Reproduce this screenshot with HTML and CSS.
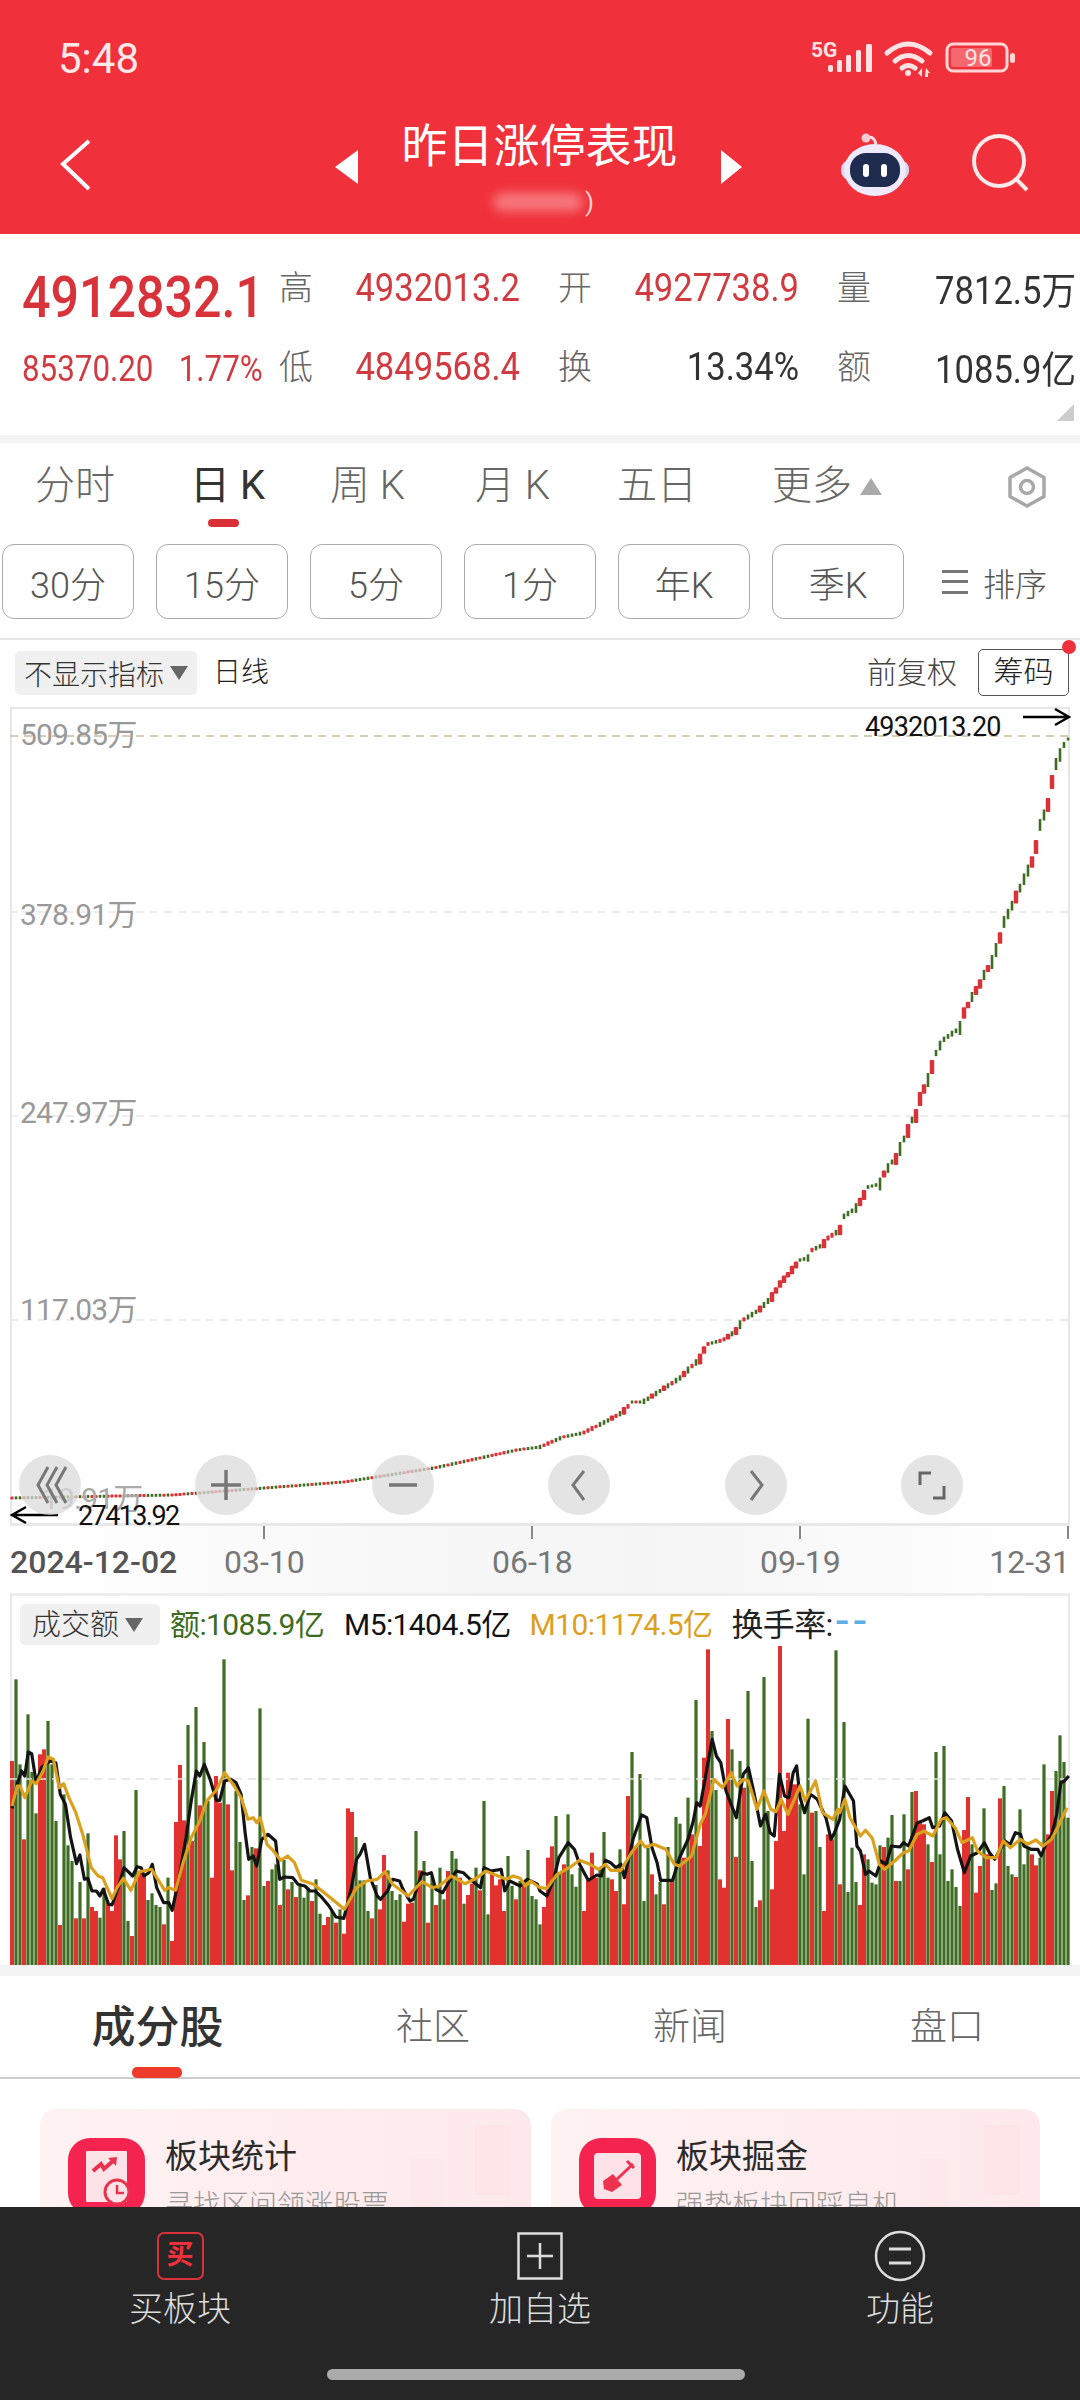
FILE: index.html
```html
<!DOCTYPE html>
<html lang="zh">
<head>
  <meta charset="UTF-8">
  <meta name="viewport" content="width=device-width, initial-scale=1.0">
  <title>昨日涨停表现</title>
  <link rel="stylesheet" href="styles.css">
</head>
<body>
  <header class="top">
    <div class="status">
      <span class="time">5:48</span>
      <svg class="status-icons" width="210" height="50" viewBox="810 30 210 50">
        <text x="811" y="57" class="five-g">5G</text>
        <g fill="#ffe3e3">
          <rect x="828" y="65" width="5" height="7" rx="2"/>
          <rect x="837" y="60" width="5" height="12" rx="1.5"/>
          <rect x="846" y="55" width="5" height="17" rx="1.5"/>
          <rect x="856" y="50" width="5" height="22" rx="1.5"/>
          <rect x="866" y="44" width="6" height="28" rx="1.5"/>
        </g>
        <g fill="none" stroke="#ffe3e3" stroke-width="5" stroke-linecap="round">
          <path d="M887 53 Q908 35 930 53"/>
          <path d="M895 61 Q908 50 922 61"/>
          <path d="M902 68 Q908 63 915 68"/>
        </g>
        <circle cx="908" cy="73" r="3" fill="#ffe3e3"/>
        <path d="M922 68 l-4 5 4 4z M926 68 l4 5 h-2 v4 h-3z" fill="#ffe3e3"/>
        <rect x="947" y="44" width="60" height="27" rx="6" fill="none" stroke="#ffd5d6" stroke-width="3"/>
        <rect x="951" y="48" width="41" height="19" rx="2" fill="#f6686f"/>
        <rect x="1010" y="53" width="5" height="10" rx="2.5" fill="#ffd5d6"/>
        <text x="978" y="66" class="batt">96</text>
      </svg>
    </div>
    <div class="nav">
      <svg class="back" width="32" height="52" viewBox="0 0 32 52"><path d="M29 2 L3 25 L29 50" fill="none" stroke="#fff" stroke-width="4"/></svg>
      <div class="nav-center">
        <span class="tri tri-left"></span>
        <div class="nav-title">
          <h1>昨日涨停表现</h1>
          <div class="nav-sub"><span class="smudge"></span><span class="paren">)</span></div>
        </div>
        <span class="tri tri-right"></span>
      </div>
      <div class="nav-right">
        <svg width="70" height="64" viewBox="0 0 70 64">
          <path d="M27 7 Q33 2 36 12" fill="none" stroke="#f8dfe8" stroke-width="3"/>
          <circle cx="26" cy="6" r="4.5" fill="#f9c9d1"/>
          <rect x="1" y="28" width="68" height="20" rx="9" fill="#d9d4f3"/>
          <ellipse cx="35" cy="38" rx="31" ry="26" fill="#efeafb"/>
          <rect x="10" y="21" width="50" height="34" rx="16" fill="#1f2c4f"/>
          <rect x="23" y="32" width="6" height="13" rx="3" fill="#fff"/>
          <rect x="41" y="32" width="6" height="13" rx="3" fill="#fff"/>
        </svg>
        <svg width="60" height="60" viewBox="0 0 60 60"><circle cx="27" cy="27" r="25" fill="none" stroke="#ffeaea" stroke-width="4"/><path d="M44 45 L55 56" stroke="#ffeaea" stroke-width="4"/></svg>
      </div>
    </div>
  </header>

  <section class="quote">
    <div class="quote-grid">
      <div class="price">4912832.1</div>
      <div class="lbl">高</div><div class="val up">4932013.2</div>
      <div class="lbl">开</div><div class="val up">4927738.9</div>
      <div class="lbl">量</div><div class="val">7812.5万</div>
      <div class="change"><span>85370.20</span><span>1.77%</span></div>
      <div class="lbl">低</div><div class="val up">4849568.4</div>
      <div class="lbl">换</div><div class="val">13.34%</div>
      <div class="lbl">额</div><div class="val">1085.9亿</div>
    </div>
    <span class="corner"></span>
  </section>

  <nav class="periods">
    <span>分时</span>
    <span class="on">日 K</span>
    <span>周 K</span>
    <span>月 K</span>
    <span>五日</span>
    <span class="more">更多<i class="tri-up"></i></span>
    <svg class="gear" width="44" height="44" viewBox="0 0 44 44"><path d="M22 3 L39 12.500 V31.500 L22 41 L5 31.500 V12.500 Z" fill="none" stroke="#a8a8a8" stroke-width="3.500" stroke-linejoin="round"/><circle cx="22" cy="22" r="6.500" fill="none" stroke="#a8a8a8" stroke-width="3.500"/></svg>
  </nav>

  <div class="ranges">
    <button>30分</button>
    <button>15分</button>
    <button>5分</button>
    <button>1分</button>
    <button>年K</button>
    <button>季K</button>
    <span class="sort"><i class="sort-icon"></i>排序</span>
  </div>

  <div class="chart-head">
    <span class="chip">不显示指标<i class="tri-down"></i></span>
    <span class="head-text">日线</span>
    <span class="head-right">前复权</span>
    <span class="chouma">筹码</span>
  </div>

  <div class="kline">
    <svg id="kline-svg" class="plot" viewBox="10 707 1060 816"></svg>
    <span class="ylab l1">509.85万</span>
    <span class="ylab l2">378.91万</span>
    <span class="ylab l3">247.97万</span>
    <span class="ylab l4">117.03万</span>
    <span class="ylab l5">19.91万</span>
    <span class="mark hi">4932013.20</span>
    <span class="mark lo">27413.92</span>
    <svg class="arrow hi-arrow" width="48" height="20" viewBox="0 0 48 20"><path d="M0 10 H46 M32 2 L46 10 L32 18" fill="none" stroke="#000" stroke-width="2.500"/></svg>
    <svg class="arrow lo-arrow" width="48" height="20" viewBox="0 0 48 20"><path d="M48 10 H2 M16 2 L2 10 L16 18" fill="none" stroke="#000" stroke-width="2.500"/></svg>
    <div class="tools">
      <span class="tool"><svg width="36" height="44" viewBox="0 0 36 44"><path d="M16 4 L6 22 L16 40 M25 4 L15 22 L25 40 M34 4 L24 22 L34 40" fill="none" stroke="#777" stroke-width="3"/></svg></span>
      <span class="tool"><svg width="34" height="34" viewBox="0 0 34 34"><path d="M2 17 H32 M17 2 V32" stroke="#777" stroke-width="3.500"/></svg></span>
      <span class="tool"><svg width="34" height="34" viewBox="0 0 34 34"><path d="M3 17 H31" stroke="#777" stroke-width="3.500"/></svg></span>
      <span class="tool"><svg width="34" height="34" viewBox="0 0 34 34"><path d="M22 3 L11 17 L22 32" fill="none" stroke="#777" stroke-width="3"/></svg></span>
      <span class="tool"><svg width="34" height="34" viewBox="0 0 34 34"><path d="M12 3 L23 17 L12 32" fill="none" stroke="#777" stroke-width="3"/></svg></span>
      <span class="tool"><svg width="34" height="34" viewBox="0 0 34 34"><path d="M16 5 H5 V17 M18 30 H29 V18" fill="none" stroke="#666" stroke-width="3"/></svg></span>
    </div>
  </div>

  <div class="axis">
    <i class="tick t1"></i><i class="tick t2"></i><i class="tick t3"></i><i class="tick t4"></i>
    <span class="date d0">2024-12-02</span>
    <span class="date d1">03-10</span>
    <span class="date d2">06-18</span>
    <span class="date d3">09-19</span>
    <span class="date d4">12-31</span>
  </div>

  <div class="volume">
    <div class="vol-head">
      <span class="chip vol-chip">成交额<i class="tri-down"></i></span>
      <span class="g">额:1085.9亿</span>
      <span class="k">M5:1404.5亿</span>
      <span class="o">M10:1174.5亿</span>
      <span class="t">换手率:<b>--</b></span>
    </div>
    <svg id="vol-svg" class="vol-plot" viewBox="10 1645 1060 319"></svg>
  </div>

  <section class="lower">
    <div class="tabs">
      <span class="tab on">成分股</span>
      <span class="tab">社区</span>
      <span class="tab">新闻</span>
      <span class="tab">盘口</span>
    </div>
    <div class="cards">
      <div class="card">
        <svg class="card-icon" width="77" height="77" viewBox="0 0 77 77">
          <rect width="77" height="77" rx="22" fill="#f5234f"/>
          <rect x="18" y="13" width="41" height="51" rx="1" fill="#fde3e8"/>
          <path d="M25 33 L33 26 L36 31 L46 22" fill="none" stroke="#e8334f" stroke-width="4"/>
          <path d="M40 20 L49 19 L48 28 Z" fill="#e8334f"/>
          <circle cx="49" cy="54" r="12" fill="#fde3e8" stroke="#e8334f" stroke-width="3"/>
          <path d="M49 47 V55 H56" fill="none" stroke="#e8334f" stroke-width="2.500"/>
        </svg>
        <div>
          <div class="card-title">板块统计</div>
          <div class="card-sub">寻找区间领涨股票</div>
        </div>
      </div>
      <div class="card">
        <svg class="card-icon" width="77" height="77" viewBox="0 0 77 77">
          <rect width="77" height="77" rx="22" fill="#f5234f"/>
          <rect x="15" y="15" width="47" height="46" rx="4" fill="#fde3e8"/>
          <path d="M54 26 L36 43 M48 23 L55 30" fill="none" stroke="#ee3350" stroke-width="3"/>
          <path d="M24 43 L34 36 L43 47 L33 54 L25 51 Z" fill="#ee3350"/>
        </svg>
        <div>
          <div class="card-title">板块掘金</div>
          <div class="card-sub">强势板块回踩良机</div>
        </div>
      </div>
    </div>
  </section>

  <footer class="bottom">
    <div class="bottom-items">
      <div class="item">
        <span class="buy-box">买</span>
        <span>买板块</span>
      </div>
      <div class="item">
        <svg width="46" height="48" viewBox="0 0 46 48"><rect x="1.500" y="1.500" width="43" height="45" fill="none" stroke="#ddd" stroke-width="2.500"/><path d="M10 24 H36 M23 11 V37" stroke="#ddd" stroke-width="2.500"/></svg>
        <span>加自选</span>
      </div>
      <div class="item">
        <svg class="fn-icon" width="52" height="52" viewBox="0 0 52 52"><circle cx="26" cy="26" r="24" fill="none" stroke="#ddd" stroke-width="2.500"/><path d="M15 19 H37 M15 33 H37" stroke="#ddd" stroke-width="3"/></svg>
        <span>功能</span>
      </div>
    </div>
    <div class="home-bar"></div>
  </footer>

  <script src="chart.js"></script>
</body>
</html>
```

FILE: styles.css
```css
* {
  box-sizing: border-box;
}
html, body {
  margin: 0;
  padding: 0;
}
body {
  position: relative;
  width: 1080px;
  height: 2400px;
  overflow: hidden;
  background: #fff;
  font-family: Roboto, "Noto Sans CJK SC", sans-serif;
  color: #333;
}
i {
  font-style: normal;
}

/* header */
.top {
  height: 234px;
  background: #f0303a;
  color: #fff;
}
.status {
  height: 88px;
  padding: 0 0 0 58px;
  display: flex;
  align-items: center;
  justify-content: space-between;
}
.time {
  font-size: 42px;
  color: #ffe8e8;
  position: relative;
  top: 14px;
}
.status-icons {
  margin-right: 60px;
  margin-top: 22px;
  display: block;
}
.five-g {
  font: bold 21px Roboto, sans-serif;
  fill: #ffe3e3;
}
.batt {
  font: 24px Roboto, sans-serif;
  fill: #ffe3e3;
  text-anchor: middle;
}
.nav {
  height: 146px;
  display: flex;
  align-items: center;
  padding-left: 60px;
  position: relative;
}
.back {
  margin-top: 8px;
}
.nav-center {
  display: flex;
  align-items: center;
  margin-left: 243px;
  width: 407px;
  margin-top: 12px;
  justify-content: space-between;
}
.tri {
  width: 0;
  height: 0;
  border-top: 17px solid transparent;
  border-bottom: 17px solid transparent;
}
.tri-left {
  border-right: 23px solid #fff;
}
.tri-right {
  border-left: 21px solid #fff;
}
.nav-title {
  text-align: center;
  margin-top: -12px;
}
.nav-title h1 {
  margin: 0;
  font-size: 46px;
  font-weight: 400;
  line-height: 60px;
  white-space: nowrap;
}
.nav-sub {
  height: 30px;
  margin-top: 11px;
  margin-bottom: -11px;
  display: flex;
  justify-content: center;
  align-items: center;
  gap: 2px;
  margin-left: 8px;
}
.smudge {
  width: 90px;
  height: 18px;
  border-radius: 9px;
  background: rgba(255, 200, 200, 0.5);
  filter: blur(6px);
}
.paren {
  font-size: 26px;
  line-height: 30px;
  color: #ffd0d0;
}
.nav-right {
  position: absolute;
  left: 840px;
  top: 44px;
  display: flex;
  gap: 62px;
  align-items: center;
}

/* quote block */
.quote {
  position: relative;
  height: 201px;
  padding: 14px 0 0 22px;
}
.quote-grid {
  display: grid;
  grid-template-columns: 219px 72px 207px 72px 207px 72px 205px;
  grid-auto-rows: 79px;
  align-items: center;
}
.price {
  font-size: 57px;
  color: #d8333a;
  white-space: nowrap;
  position: relative;
  top: 10px;
  font-weight: 500;
  transform: scaleX(0.88);
  transform-origin: left center;
}
.change {
  display: flex;
  gap: 29px;
  font-size: 36px;
  color: #d03a40;
  white-space: nowrap;
  position: relative;
  top: 2px;
  transform: scaleX(0.87);
  transform-origin: left center;
}
.lbl {
  text-align: right;
  font-size: 34px;
  color: #666;
  line-height: 44px;
  font-weight: 300;
}
.val {
  text-align: right;
  font-size: 38px;
  color: #333;
  white-space: nowrap;
  transform: scaleX(0.91);
  transform-origin: right center;
}
.val.up {
  color: #d03a40;
}
.corner {
  position: absolute;
  right: 6px;
  bottom: 14px;
  width: 0;
  height: 0;
  border-left: 17px solid transparent;
  border-bottom: 17px solid #ccc;
}

/* period tabs */
.periods {
  border-top: 8px solid #f3f3f3;
  height: 109px;
  padding: 21px 0 0 35px;
  display: grid;
  grid-template-columns: 155px 140px 145px 142px 155px 230px;
  grid-template-rows: 44px;
  font-size: 40px;
  line-height: 44px;
  color: #666;
  font-weight: 300;
  position: relative;
}
.periods .on {
  color: #333;
  font-weight: 400;
  position: relative;
}
.periods .on::after {
  content: "";
  position: absolute;
  left: 18px;
  top: 55px;
  width: 31px;
  height: 8px;
  border-radius: 4px;
  background: #dc3038;
}
.more {
  display: flex;
  align-items: center;
  gap: 8px;
}
.tri-up {
  display: inline-block;
  width: 0;
  height: 0;
  border-left: 11px solid transparent;
  border-right: 11px solid transparent;
  border-bottom: 17px solid #aaa;
}
.gear {
  position: absolute;
  left: 1005px;
  top: 22px;
}

/* range buttons */
.ranges {
  padding-left: 2px;
  display: flex;
  gap: 22px;
  align-items: center;
  height: 75px;
}
.ranges button {
  width: 132px;
  height: 75px;
  border: 1.5px solid #aaa;
  border-radius: 12px;
  background: #fff;
  font: 300 36px Roboto, "Noto Sans CJK SC", sans-serif;
  color: #555;
  padding: 0;
}
.sort {
  margin-left: 16px;
  display: flex;
  align-items: center;
  gap: 15px;
  font-size: 32px;
  font-weight: 300;
  color: #555;
}
.sort-icon {
  width: 26px;
  height: 24px;
  border-top: 3px solid #777;
  border-bottom: 3px solid #777;
  position: relative;
}
.sort-icon::after {
  content: "";
  position: absolute;
  left: 0;
  right: 0;
  top: 7.500px;
  height: 3px;
  background: #777;
}

/* chart head */
.chart-head {
  margin-top: 19px;
  border-top: 2px solid #e6e6e6;
  height: 69px;
  padding: 11px 11px 0 15px;
  display: flex;
  align-items: flex-start;
  position: relative;
}
.chip {
  display: inline-flex;
  align-items: center;
  gap: 6px;
  width: 182px;
  height: 44px;
  padding: 0 7px 0 9px;
  background: #f0f0f0;
  border-radius: 5px;
  font-size: 28px;
  color: #333;
  font-weight: 300;
  white-space: nowrap;
}
.tri-down {
  display: inline-block;
  width: 0;
  height: 0;
  border-left: 9px solid transparent;
  border-right: 9px solid transparent;
  border-top: 14px solid #666;
}
.head-text {
  margin-left: 16px;
  font-size: 28px;
  line-height: 44px;
  font-weight: 300;
  color: #222;
}
.head-right {
  margin-left: auto;
  font-size: 30px;
  line-height: 44px;
  font-weight: 300;
  color: #444;
}
.chouma {
  margin-left: 21px;
  margin-top: -2px;
  width: 91px;
  height: 47px;
  border: 1.5px solid #555;
  border-radius: 5px;
  font-size: 30px;
  line-height: 43px;
  text-align: center;
  font-weight: 300;
  color: #222;
  position: relative;
}
.chouma::after {
  content: "";
  position: absolute;
  right: -8px;
  top: -10px;
  width: 14px;
  height: 14px;
  border-radius: 50%;
  background: #f0303a;
}

/* k line */
.kline {
  position: relative;
  z-index: 1;
  height: 816px;
  margin: 0 10px;
  border: 2px solid #e6e6e6;
  border-bottom: 0;
}
.plot {
  position: absolute;
  left: -2px;
  top: -2px;
  width: 1060px;
  height: 816px;
}
.ylab {
  position: absolute;
  left: 8px;
  font-size: 30px;
  line-height: 32px;
  letter-spacing: -0.800px;
  color: #999;
  font-weight: 400;
}
.l1 { top: 10px; }
.l2 { top: 190px; }
.l3 { top: 388px; }
.l4 { top: 585px; }
.l5 { top: 774px; left: 30px; color: #aaa; }
.mark {
  position: absolute;
  font-size: 27px;
  line-height: 30px;
  letter-spacing: -0.800px;
  color: #111;
}
.hi { left: 853px; top: 3px; }
.lo { left: 66px; top: 792px; letter-spacing: -1.600px; }
.arrow {
  position: absolute;
}
.hi-arrow { left: 1011px; top: -2px; }
.lo-arrow { left: -2px; top: 796px; }
.tools {
  position: absolute;
  left: 7px;
  top: 746px;
  width: 944px;
  display: flex;
  justify-content: space-between;
}
.tool {
  width: 62px;
  height: 60px;
  border-radius: 50%;
  background: rgba(218, 218, 218, 0.72);
  display: flex;
  align-items: center;
  justify-content: center;
}

/* date axis */
.axis {
  position: relative;
  height: 70px;
  margin: 0 10px;
  border-top: 3px solid #e8e8e8;
  background: linear-gradient(90deg, #fff, #f8f8f8 35%, #f5f5f5 60%, #fff);
}
.tick {
  position: absolute;
  top: 0;
  width: 2px;
  height: 13px;
  background: #888;
}
.t1 { left: 253px; }
.t2 { left: 521px; }
.t3 { left: 789px; }
.t4 { left: 1057px; }
.date {
  position: absolute;
  top: 18px;
  font-size: 32px;
  line-height: 36px;
  color: #777;
  font-weight: 400;
  white-space: nowrap;
}
.d0 { left: 0; color: #555; font-weight: 500; }
.d1 { left: 214px; }
.d2 { left: 482px; }
.d3 { left: 750px; }
.d4 { right: 0; }

/* volume */
.volume {
  margin: 0 10px;
  border-top: 3px solid #eee;
  border-left: 2px solid #e8e8e8;
  border-right: 2px solid #e8e8e8;
  position: relative;
  height: 372px;
}
.vol-head {
  height: 50px;
  padding: 7px 0 0 8px;
  display: flex;
  align-items: center;
  font-size: 30px;
  line-height: 40px;
  letter-spacing: -0.600px;
  white-space: nowrap;
}
.vol-chip {
  width: 140px;
  height: 41px;
  font-size: 29px;
  letter-spacing: 0;
  padding: 0 6px 0 12px;
}
.vol-head .g { color: #3d6b22; margin-left: 10px; }
.vol-head .k { color: #111; margin-left: 20px; }
.vol-head .o { color: #dba01e; margin-left: 19px; }
.vol-head .t { color: #222; margin-left: 19px; font-size: 32px; }
.vol-head b {
  color: #5ab0e8;
  font-weight: 400;
  font-size: 46px;
  line-height: 30px;
  letter-spacing: 5px;
  margin-left: 3px;
}
.vol-plot {
  display: block;
  position: absolute;
  left: -2px;
  top: 50px;
  width: 1060px;
  height: 319px;
}

/* lower */
.lower {
  border-top: 11px solid #f3f3f3;
}
.tabs {
  position: relative;
  height: 103px;
  border-bottom: 2px solid #ccc;
  display: grid;
  grid-template-columns: 315px 236px 278px 236px;
  font-size: 37px;
  font-weight: 300;
  color: #666;
}
.tab {
  line-height: 104px;
  text-align: center;
  white-space: nowrap;
}
.tab.on {
  font-size: 44px;
  font-weight: 500;
  color: #333;
  position: relative;
}
.tab.on::after {
  content: "";
  position: absolute;
  left: 132px;
  top: 91px;
  width: 50px;
  height: 11px;
  border-radius: 5px;
  background: #ee3a2a;
}
.cards {
  display: grid;
  grid-template-columns: 491px 489px;
  gap: 20px;
  padding: 30px 40px 0;
}
.card {
  position: relative;
  overflow: hidden;
  height: 160px;
  border-radius: 16px;
  padding: 29px 0 0 28px;
  display: flex;
  gap: 20px;
  background: linear-gradient(90deg, #fff2f3, #feecee 60%, #fde9eb);
}
/* pale candle marks behind the card text */
.card::before,
.card::after {
  content: "";
  position: absolute;
  background: #fde5e8;
}
.card::before {
  right: 20px;
  top: 16px;
  width: 36px;
  height: 70px;
}
.card::after {
  right: 90px;
  top: 50px;
  width: 30px;
  height: 60px;
  opacity: 0.4;
}
.card > * {
  position: relative;
  z-index: 1;
}
.card-icon {
  flex: none;
}
.card-title {
  font-size: 33px;
  line-height: 38px;
  font-weight: 400;
  color: #2a2a2a;
}
.card-sub {
  font-size: 28px;
  line-height: 40px;
  margin-top: 10px;
  font-weight: 300;
  color: #999;
}

/* bottom bar */
.bottom {
  position: absolute;
  z-index: 2;
  left: 0;
  right: 0;
  top: 2207px;
  height: 193px;
  background: #262626;
}
.bottom-items {
  display: grid;
  grid-template-columns: 360px 360px 360px;
  padding-top: 25px;
  color: #ddd;
  font-size: 34px;
  font-weight: 300;
  text-align: center;
}
.item {
  display: flex;
  flex-direction: column;
  align-items: center;
  gap: 6px;
  line-height: 46px;
}
.fn-icon {
  margin: -2px 0;
}
.buy-box {
  width: 47px;
  height: 48px;
  border: 2.500px solid #d8333a;
  border-radius: 7px;
  color: #f0303a;
  font-size: 27px;
  line-height: 42px;
  font-weight: 700;
}
.home-bar {
  position: absolute;
  left: 327px;
  top: 162px;
  width: 418px;
  height: 11px;
  border-radius: 6px;
  background: #aaa;
}
```

FILE: chart.js
```js
// Volume tops read off the chart, negative means a red day
var tops = [
  -480,235,490,-715,340,513,637,-460,-445,360,490,660,-972,580,733,780,-952,843,-952,697,
  -918,-930,950,860,-905,-930,-703,-775,690,960,-1005,567,-810,-820,897,877,912,918,-970,830,
  -1020,-663,-492,-658,372,-720,318,-613,423,600,-830,-525,-605,175,-610,-808,570,723,897,-883,
  738,-742,322,855,-840,805,790,-912,777,-865,843,-888,850,890,860,-900,835,938,-972,-948,
  930,-965,925,-998,-622,-633,708,838,838,930,-952,852,-925,-762,808,870,897,880,-962,-908,
  -905,690,-808,780,-965,825,-912,800,895,-810,750,773,-830,908,-882,-848,800,-868,600,940,
  -810,-853,-835,-930,765,855,-895,840,-850,747,885,895,970,
  -918,-770,-736,645,815,-790,640,820,857,800,-930,-838,-755,-830,800,693,830,-835,-870,745,
  -910,-585,453,-735,519,900,740,-820,880,843,-910,738,-840,648,668,-770,590,-700,297,-735,
  -470,-145,390,567,-835,-860,-354,445,-768,480,-560,270,780,918,-898,228,630,-865,-720,-135,
  -690,-515,-550,-550,610,820,353,-635,630,738,-930,-700,-715,148,-850,363,873,740,843,-912,
  -760,775,845,850,733,-738,710,642,-840,840,640,-805,573,-570,-660,-670,730,-783,453,760,
  435,840,805,858,915,-687,-588,730,-875,-795,622,-760,867,847,-592,555,795,820,-828,625,
  790,740,-760,-793,770,490,-700,-570,510,403,483,650
];

// Moving averages, same read-off, [x, y] in crop units
var blackLeft = [35,622,50,550,62,510,72,525,82,453,92,458,105,545,120,500,145,480,162,485,175,580,190,610,205,710,222,788,232,762,245,835,255,832,267,870,280,870,290,885,300,865,315,910,325,912,345,855,360,800,375,815,385,825,398,797,410,800,418,825,432,815,442,790,455,860,475,905,490,905,500,928,520,830,540,710,555,600,570,510,580,525,593,490,610,535,628,598,638,598,652,540,670,535,685,545,700,580,712,700,722,775,735,765,745,795,760,715,778,700,800,720,812,835,825,828,850,830,865,850,885,855,900,870,915,870,935,890,955,915,975,948,998,952,1020,860,1035,775,1045,760,1058,730,1075,830,1095,885,1105,895,1125,870,1140,835,1160,840,1170,865,1190,900,1200,895,1225,815,1240,820,1252,815,1265,865,1285,875,1310,830,1325,810,1345,815,1365,835,1395,860,1405,800,1425,810,1455,805,1465,870,1480,840,1510,855,1530,835,1560,850];
var blackRight = [0,870,20,885,40,835,55,770,82,725,100,745,115,790,140,838,165,822,178,825,190,778,205,785,220,800,235,790,245,830,270,715,295,642,310,650,325,740,340,785,350,838,385,838,405,770,430,715,445,660,455,605,465,615,480,530,500,415,512,465,525,485,540,570,555,610,570,650,590,520,605,500,620,570,640,675,655,640,668,695,680,705,695,520,710,585,722,590,735,515,745,495,755,590,768,635,785,580,805,595,830,650,845,715,855,695,870,655,885,555,910,600,920,735,930,750,945,820,955,810,975,825,990,780,1005,790,1020,735,1045,738,1055,725,1070,735,1095,665,1110,660,1130,650,1140,680,1160,675,1175,635,1195,660,1212,745,1232,815,1250,765,1270,755,1290,725,1305,755,1320,775,1350,720,1365,730,1380,695,1395,700,1405,735,1425,745,1445,745,1455,765,1470,725,1485,705,1500,640,1512,545,1522,540,1535,525];
var goldLeft = [35,615,50,555,58,555,72,590,92,540,105,548,125,510,140,468,155,475,172,560,185,548,200,590,220,635,240,700,265,800,285,825,298,830,325,893,340,860,358,832,380,868,405,812,440,805,478,868,490,860,510,868,530,790,555,710,580,660,600,600,630,565,652,515,680,555,700,590,720,655,735,650,745,665,755,650,775,730,790,745,815,778,835,765,855,785,875,838,910,850,935,870,1000,925,1035,860,1065,840,1095,835,1118,812,1140,850,1185,885,1225,842,1255,860,1275,855,1310,825,1350,848,1385,830,1410,810,1470,835,1490,825,1510,832,1525,855,1540,840];
var goldRight = [0,860,20,862,50,820,85,800,115,778,145,790,170,805,190,790,205,808,235,808,265,755,292,720,305,738,330,730,365,745,390,790,405,795,440,765,465,670,480,640,505,535,530,560,555,515,572,555,590,535,605,540,630,625,650,570,670,625,685,632,700,595,720,640,755,555,770,600,800,540,820,635,850,655,865,625,870,635,885,595,900,650,930,705,945,688,965,712,985,790,1000,805,1030,780,1055,755,1070,750,1095,700,1115,690,1140,705,1165,655,1180,650,1205,680,1225,725,1255,710,1270,750,1295,770,1325,770,1345,720,1365,740,1395,715,1415,730,1440,717,1460,735,1485,715,1505,675,1530,620];

// Price curve in page pixels
var curve = [[10,1498],[172,1495],[344,1482],[434,1468],[480,1458],[517,1450],[540,1447],[563,1437],[583,1433],[607,1421],[623,1412],[632,1402],[643,1402],[663,1389],[680,1378],[692,1366],[700,1359],[704,1350],[708,1344],[723,1340],[736,1331],[743,1320],[753,1314],[760,1309],[772,1297],[780,1284],[792,1270],[800,1260],[808,1258],[812,1250],[823,1245],[828,1238],[840,1230],[843,1217],[856,1208],[860,1202],[864,1195],[868,1187],[880,1184],[884,1174],[892,1162],[896,1159],[900,1149],[904,1139],[908,1131],[912,1120],[916,1116],[920,1099],[924,1089],[928,1080],[932,1067],[936,1053],[943,1040],[960,1028],[964,1013],[972,997],[980,984],[984,975],[992,962],[1000,938],[1004,922],[1010,910],[1016,897],[1025,877],[1032,862],[1036,847],[1040,825],[1044,815],[1048,805],[1052,782],[1056,764],[1060,755],[1064,745],[1068,739]];

var RED = '#e2322f';
var GREEN = '#3f6d24';
var BASE = 1964;
var NS = 'http://www.w3.org/2000/svg';

function add(svg, tag, attrs) {
  var el = document.createElementNS(NS, tag);
  for (var k in attrs) el.setAttribute(k, attrs[k]);
  svg.appendChild(el);
  return el;
}

function curveY(x) {
  for (var i = 1; i < curve.length; i++) {
    if (x <= curve[i][0]) {
      var a = curve[i - 1], b = curve[i];
      return a[1] + (b[1] - a[1]) * (x - a[0]) / (b[0] - a[0]);
    }
  }
  return curve[curve.length - 1][1];
}

function cropPoints(list, offset) {
  var out = [];
  for (var i = 0; i < list.length; i += 2) {
    out.push((offset + list[i] / 2.903).toFixed(1) + ',' + (1600 + list[i + 1] / 3).toFixed(1));
  }
  return out;
}

function dashed(svg, y, color, dash) {
  add(svg, 'line', { x1: 10, x2: 1070, y1: y, y2: y, stroke: color, 'stroke-width': 1.5, 'stroke-dasharray': dash });
}

// K line
var kline = document.getElementById('kline-svg');
dashed(kline, 736, '#c9bd9c', '8 6');
dashed(kline, 912, '#e8e8e8', '8 6');
dashed(kline, 1116, '#e8e8e8', '8 6');
dashed(kline, 1320, '#e8e8e8', '8 6');

tops.forEach(function (t, i) {
  var x = 12 + i * 4;
  var y = curveY(x);
  var slope = Math.abs(curveY(x + 4) - y);
  var h = slope * (0.5 + 0.7 * Math.abs(Math.sin(i * 5.1))) + 2.5;
  h = Math.max(3, Math.min(14, h));
  var w = t < 0 ? (h > 5 ? 4.5 : 3.2) : 2.6;
  add(kline, 'rect', {
    x: x - w / 2, y: y - h / 2, width: w, height: h, rx: t < 0 ? 1 : 0,
    fill: t < 0 ? '#d9333a' : GREEN
  });
});

// Volume
var vol = document.getElementById('vol-svg');
tops.forEach(function (t, i) {
  var top = 1600 + Math.abs(t) / 3;
  var w = t < 0 ? 4 : 3.2;
  add(vol, 'rect', {
    x: 12 + i * 4 - w / 2, y: top, width: w, height: BASE - top,
    fill: t < 0 ? RED : GREEN
  });
});
dashed(vol, 1778, '#e2e2e2', '8 6');

function line(left, right, color) {
  var pts = cropPoints(left, 0).concat(cropPoints(right, 540));
  add(vol, 'polyline', {
    points: pts.join(' '), fill: 'none', stroke: color,
    'stroke-width': 3.2, 'stroke-linejoin': 'round'
  });
}
line(blackLeft, blackRight, '#141414');
line(goldLeft, goldRight, '#dba01e');
```
